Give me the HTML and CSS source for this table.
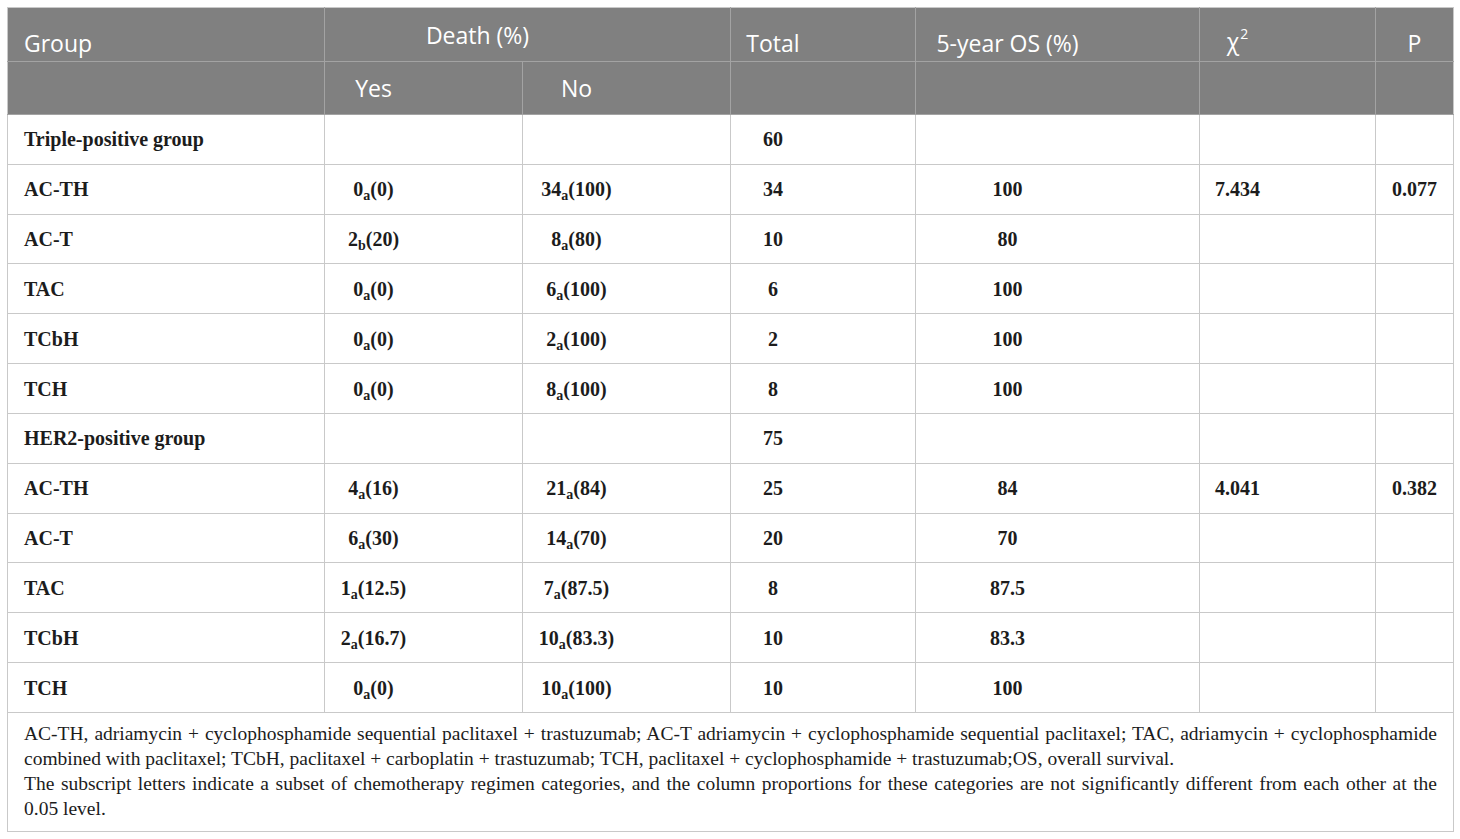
FILE: index.html
```html
<!DOCTYPE html>
<html lang="en">
<head>
<meta charset="utf-8">
<title>Table</title>
<link rel="stylesheet" href="styles.css">
</head>
<body>
<div class="wrap">
<table class="tbl">
  <colgroup>
    <col class="c1"><col class="c2"><col class="c3"><col class="c4"><col class="c5"><col class="c6"><col class="c7">
  </colgroup>
  <thead>
    <tr class="h1">
      <th class="first bot">Group</th>
      <th class="mid" colspan="2">Death (%)</th>
      <th class="bot">Total</th>
      <th class="bot">5-year OS (%)</th>
      <th class="chi">χ<sup>2</sup></th>
      <th class="bot p">P</th>
    </tr>
    <tr class="h2">
      <th class="first"></th>
      <th>Yes</th>
      <th>No</th>
      <th></th>
      <th></th>
      <th></th>
      <th class="p"></th>
    </tr>
  </thead>
  <tbody>
    <tr>
      <td class="first grp">Triple-positive group</td>
      <td></td><td></td><td>60</td><td></td><td></td><td class="p"></td>
    </tr>
    <tr>
      <td class="first">AC-TH</td>
      <td>0<sub>a</sub>(0)</td><td>34<sub>a</sub>(100)</td><td>34</td><td>100</td><td>7.434</td><td class="p">0.077</td>
    </tr>
    <tr>
      <td class="first">AC-T</td>
      <td>2<sub>b</sub>(20)</td><td>8<sub>a</sub>(80)</td><td>10</td><td>80</td><td></td><td class="p"></td>
    </tr>
    <tr>
      <td class="first">TAC</td>
      <td>0<sub>a</sub>(0)</td><td>6<sub>a</sub>(100)</td><td>6</td><td>100</td><td></td><td class="p"></td>
    </tr>
    <tr>
      <td class="first">TCbH</td>
      <td>0<sub>a</sub>(0)</td><td>2<sub>a</sub>(100)</td><td>2</td><td>100</td><td></td><td class="p"></td>
    </tr>
    <tr>
      <td class="first">TCH</td>
      <td>0<sub>a</sub>(0)</td><td>8<sub>a</sub>(100)</td><td>8</td><td>100</td><td></td><td class="p"></td>
    </tr>
    <tr>
      <td class="first grp">HER2-positive group</td>
      <td></td><td></td><td>75</td><td></td><td></td><td class="p"></td>
    </tr>
    <tr>
      <td class="first">AC-TH</td>
      <td>4<sub>a</sub>(16)</td><td>21<sub>a</sub>(84)</td><td>25</td><td>84</td><td>4.041</td><td class="p">0.382</td>
    </tr>
    <tr>
      <td class="first">AC-T</td>
      <td>6<sub>a</sub>(30)</td><td>14<sub>a</sub>(70)</td><td>20</td><td>70</td><td></td><td class="p"></td>
    </tr>
    <tr>
      <td class="first">TAC</td>
      <td>1<sub>a</sub>(12.5)</td><td>7<sub>a</sub>(87.5)</td><td>8</td><td>87.5</td><td></td><td class="p"></td>
    </tr>
    <tr>
      <td class="first">TCbH</td>
      <td>2<sub>a</sub>(16.7)</td><td>10<sub>a</sub>(83.3)</td><td>10</td><td>83.3</td><td></td><td class="p"></td>
    </tr>
    <tr>
      <td class="first">TCH</td>
      <td>0<sub>a</sub>(0)</td><td>10<sub>a</sub>(100)</td><td>10</td><td>100</td><td></td><td class="p"></td>
    </tr>
  </tbody>
  <tfoot>
    <tr>
      <td class="note" colspan="7">
        <p>AC-TH, adriamycin + cyclophosphamide sequential paclitaxel + trastuzumab; AC-T adriamycin + cyclophosphamide sequential paclitaxel; TAC, adriamycin + cyclophosphamide combined with paclitaxel; TCbH, paclitaxel + carboplatin + trastuzumab; TCH, paclitaxel + cyclophosphamide + trastuzumab;OS, overall survival.</p>
        <p>The subscript letters indicate a subset of chemotherapy regimen categories, and the column proportions for these categories are not significantly different from each other at the 0.05&nbsp;level.</p>
      </td>
    </tr>
  </tfoot>
</table>
</div>
</body>
</html>
```

FILE: styles.css
```css
html, body {
  margin: 0;
  padding: 0;
  background: #ffffff;
}

.wrap {
  padding: 7px 7px 0 7px;
}

.tbl {
  width: 1446px;
  border-collapse: collapse;
  table-layout: fixed;
  border: 1px solid #c9c9c9;
}

.c1 { width: 317px; }
.c2 { width: 198px; }
.c3 { width: 208px; }
.c4 { width: 185px; }
.c5 { width: 284px; }
.c6 { width: 176px; }
.c7 { width: 78px; }

.tbl th {
  background: #808080;
  color: #ffffff;
  font-family: "Open Sans", "DejaVu Sans", sans-serif;
  font-weight: normal;
  font-size: 23px;
  line-height: 30px;
  border: 1px solid #a3a3a3;
  text-align: center;
  padding: 0 100px 0 0;
  vertical-align: middle;
  white-space: nowrap;
}

.tbl thead tr.h1 th {
  border-top-color: #c9c9c9;
}

.tbl th.first {
  text-align: left;
  padding: 0 0 0 16px;
  border-left-color: #c9c9c9;
}

.tbl th.p {
  padding: 0;
  border-right-color: #c9c9c9;
}

.tbl th.bot {
  vertical-align: bottom;
  padding-bottom: 3px;
}

.tbl th.chi {
  vertical-align: bottom;
  padding-bottom: 5px;
  padding-right: 100px;
}

.tbl th.chi sup {
  font-size: 14px;
  line-height: 0;
  vertical-align: 11px;
  margin-left: 1px;
}

.tbl tr.h1 { height: 54px; }
.tbl tr.h2 { height: 53px; }

.tbl tbody tr { height: 49.83px; }

.tbl td {
  border: 1px solid #c9c9c9;
  font-family: "Liberation Serif", "Times New Roman", serif;
  font-weight: bold;
  font-size: 20px;
  line-height: 24px;
  color: #1c1c1c;
  text-align: center;
  padding: 0 100px 0 0;
  vertical-align: middle;
  white-space: nowrap;
}

.tbl td.first {
  text-align: left;
  padding: 0 0 0 16px;
}

.tbl td.p {
  padding: 0;
}

.tbl td sub {
  font-size: 14px;
  line-height: 0;
  vertical-align: -4px;
}

.tbl td.note {
  white-space: normal;
  text-align: justify;
  font-weight: normal;
  font-size: 19.5px;
  line-height: 25px;
  padding: 8px 16px 10px 16px;
  vertical-align: top;
}

.note p {
  margin: 0;
}
```
